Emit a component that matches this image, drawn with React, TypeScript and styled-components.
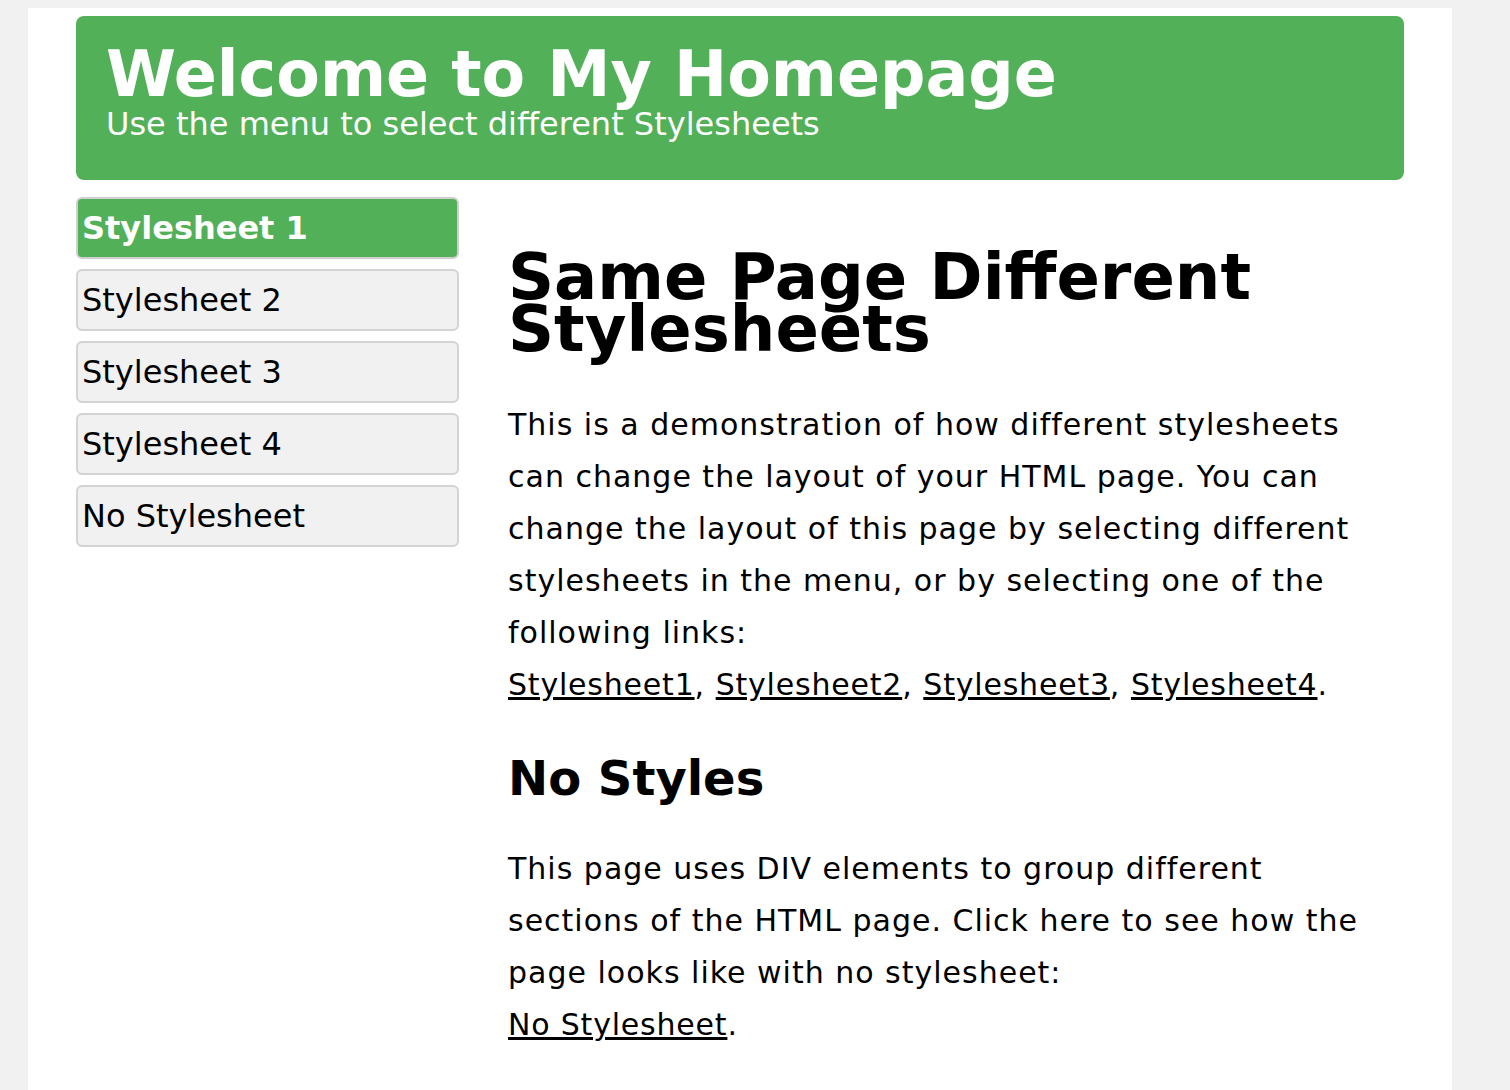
import React from 'react'
import styled, { createGlobalStyle } from 'styled-components'

const Global = createGlobalStyle`
  html, body { margin: 0; padding: 0; background: #f1f1f1; }
  body { font-family: "DejaVu Sans", Verdana, sans-serif; color: #000; }
`

const Page = styled.div`
  margin: 8px 58px 0 28px;
  background: #fff;
  padding: 8px 48px 40px;
  min-height: 1082px;
  box-sizing: border-box;
`

const Header = styled.header`
  background: #52b058;
  color: #fff;
  border-radius: 8px;
  padding: 26px 30px 40px;
  height: 164px;
  box-sizing: border-box;
`

const SiteTitle = styled.h1`
  margin: 0;
  font-size: 63.5px;
  line-height: 64px;
  font-weight: bold;
`

const Tagline = styled.p`
  margin: 0;
  font-size: 32px;
  line-height: 36px;
`

const Body = styled.div`
  display: grid;
  grid-template-columns: 383px 1fr;
  column-gap: 49px;
  margin-top: 17px;
`

const Menu = styled.nav`
  display: flex;
  flex-direction: column;
  gap: 10px;
`

const MenuItem = styled.a<{ $active?: boolean }>`
  display: block;
  height: 62px;
  box-sizing: border-box;
  border: 2px solid ${p => (p.$active ? '#cfcfcf' : '#d3d3d3')};
  border-radius: 6px;
  background: ${p => (p.$active ? '#52b058' : '#f1f1f1')};
  color: ${p => (p.$active ? '#fff' : '#000')};
  font-weight: ${p => (p.$active ? 'bold' : 'normal')};
  font-size: 32px;
  line-height: 58px;
  padding: 0 4px;
  text-decoration: none;
`

const Main = styled.main`
  padding: 54px 20px 0 0;
`

const Heading = styled.h2`
  margin: 0 0 44px;
  font-size: 64px;
  line-height: 52px;
  font-weight: bold;
`

const SubHeading = styled.h3`
  margin: 41px 0 39px;
  font-size: 48px;
  line-height: 52px;
  font-weight: bold;
`

const Para = styled.p`
  margin: 0;
  font-size: 30px;
  letter-spacing: 1px;
  line-height: 52px;
`

const Link = styled.a`
  color: #000;
  text-decoration: underline;
  letter-spacing: 0.8px;
`

export default function App() {
  const items = ['Stylesheet 1', 'Stylesheet 2', 'Stylesheet 3', 'Stylesheet 4', 'No Stylesheet']
  return (
    <>
      <Global />
      <Page>
        <Header>
          <SiteTitle>Welcome to My Homepage</SiteTitle>
          <Tagline>Use the menu to select different Stylesheets</Tagline>
        </Header>
        <Body>
          <Menu>
            {items.map((t, i) => (
              <MenuItem key={t} href="#" $active={i === 0}>{t}</MenuItem>
            ))}
          </Menu>
          <Main>
            <Heading>Same Page Different Stylesheets</Heading>
            <Para>
              This is a demonstration of how different stylesheets can change the layout of your HTML page.
              You can change the layout of this page by selecting different stylesheets in the menu, or by
              selecting one of the following links:
              <br />
              <Link href="#">Stylesheet1</Link>, <Link href="#">Stylesheet2</Link>,{' '}
              <Link href="#">Stylesheet3</Link>, <Link href="#">Stylesheet4</Link>.
            </Para>
            <SubHeading>No Styles</SubHeading>
            <Para>
              This page uses DIV elements to group different sections of the HTML page. Click here to see
              how the page looks like with no stylesheet:
              <br />
              <Link href="#">No Stylesheet</Link>.
            </Para>
          </Main>
        </Body>
      </Page>
    </>
  )
}
